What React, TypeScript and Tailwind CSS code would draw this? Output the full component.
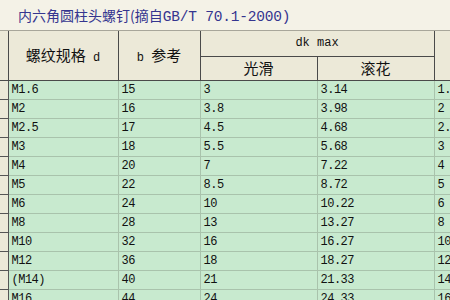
import React from 'react';

const rows: [string, string, string, string, string][] = [
  ['M1.6', '15', '3', '3.14', '1.'],
  ['M2', '16', '3.8', '3.98', '2'],
  ['M2.5', '17', '4.5', '4.68', '2.'],
  ['M3', '18', '5.5', '5.68', '3'],
  ['M4', '20', '7', '7.22', '4'],
  ['M5', '22', '8.5', '8.72', '5'],
  ['M6', '24', '10', '10.22', '6'],
  ['M8', '28', '13', '13.27', '8'],
  ['M10', '32', '16', '16.27', '10'],
  ['M12', '36', '18', '18.27', '12'],
  ['(M14)', '40', '21', '21.33', '14'],
  ['M16', '44', '24', '24.33', '16'],
];

const mono = "font-['Liberation_Mono','Noto_Sans_CJK_SC',monospace]";
const cjk = "font-['Noto_Sans_CJK_SC',sans-serif]";

export default function App() {
  return (
    <div className="w-[450px] h-[300px] overflow-hidden bg-[#ece9d8]">
      {/* Title */}
      <div className="h-[31px] bg-[#f4f2e7] border-b border-[#a8a69a] pl-[18px] pt-[4px] text-[#35358f] whitespace-nowrap leading-[22px]">
        <span className={`${cjk} text-[14px]`}>内六角圆柱头螺钉(摘自</span>
        <span className={`${mono} text-[14.5px] tracking-[-0.2px]`}>GB/T 70.1-2000)</span>
      </div>

      <table className="border-collapse table-fixed w-[470px] text-[#111]">
        <colgroup>
          <col className="w-[8px]" />
          <col className="w-[110px]" />
          <col className="w-[82px]" />
          <col className="w-[117px]" />
          <col className="w-[117px]" />
          <col className="w-[36px]" />
        </colgroup>
        <thead>
          <tr className="h-[25px] bg-[#ece9d8]">
            <th rowSpan={2} className="border border-[#4a4a4a] border-t-0 border-l-0 p-0"></th>
            <th rowSpan={2} className="border border-[#4a4a4a] border-t-0 p-0 font-normal whitespace-nowrap">
              <span className={`${cjk} text-[15px]`}>螺纹规格</span>
              <span className={`${mono} text-[12px]`}> d</span>
            </th>
            <th rowSpan={2} className="border border-[#4a4a4a] border-t-0 p-0 font-normal whitespace-nowrap">
              <span className={`${mono} text-[12px]`}>b </span>
              <span className={`${cjk} text-[15px]`}>参考</span>
            </th>
            <th colSpan={2} className={`border border-[#4a4a4a] border-t-0 p-0 font-normal ${mono} text-[12px]`}>
              dk max
            </th>
            <th rowSpan={2} className="border border-[#4a4a4a] border-t-0 border-r-0 p-0"></th>
          </tr>
          <tr className="h-[24px] bg-[#ece9d8]">
            <th className={`border border-[#4a4a4a] p-0 font-normal ${cjk} text-[15px]`}>光滑</th>
            <th className={`border border-[#4a4a4a] p-0 font-normal ${cjk} text-[15px]`}>滚花</th>
          </tr>
        </thead>
        <tbody>
          {rows.map((r, i) => (
            <tr key={i} className="h-[19px]">
              <td className="border-r border-b border-[#555] bg-[#ece9d8] p-0"></td>
              {r.map((c, j) => (
                <td
                  key={j}
                  className={`border border-[#a9c3ac] bg-[#c8eacf] pl-[3px] py-0 ${mono} text-[12px] tracking-[-0.5px] leading-none whitespace-nowrap overflow-hidden`}
                >
                  {c}
                </td>
              ))}
            </tr>
          ))}
        </tbody>
      </table>
    </div>
  );
}
